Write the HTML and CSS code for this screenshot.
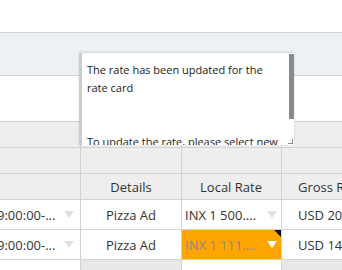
FILE: index.html
```html
<!DOCTYPE html>
<html lang="en">
<head>
    <meta charset="UTF-8">
    <title>Rate Card</title>
    <link rel="stylesheet" href="styles.css">
</head>
<body>
    <div class="page">
        <div class="top"></div>
        <div class="toolbar"></div>
        <div class="filter"></div>
        <div class="grid">
            <div class="row band"><div class="cell"></div><div class="cell"></div><div class="cell"></div><div class="cell"></div></div>
            <div class="row band"><div class="cell"></div><div class="cell"></div><div class="cell"></div><div class="cell"></div></div>
            <div class="row head">
                <div class="cell"></div>
                <div class="cell center">Details</div>
                <div class="cell center">Local Rate</div>
                <div class="cell">Gross Rate</div>
            </div>
            <div class="row data">
                <div class="cell clip"><span class="time">9:00:00-...</span><span class="arrow"></span></div>
                <div class="cell center">Pizza Ad</div>
                <div class="cell"><span>INX 1 500....</span><span class="arrow"></span></div>
                <div class="cell">USD 20,000.00</div>
            </div>
            <div class="row data">
                <div class="cell clip"><span class="time">9:00:00-...</span><span class="arrow"></span></div>
                <div class="cell center">Pizza Ad</div>
                <div class="cell changed"><span>INX 1 111....</span><span class="arrow white"></span></div>
                <div class="cell">USD 14,000.00</div>
            </div>
            <div class="row foot"><div class="cell"></div><div class="cell gray"></div><div class="cell"></div><div class="cell gray"></div></div>
        </div>

        <div class="tooltip">
            <div class="tip-text">
                The rate has been updated for the<br>
                rate card<br>
                <br>
                <br>
                To update the rate, please select new
            </div>
            <div class="scrollbar"></div>
            <div class="grip"></div>
        </div>
    </div>
</body>
</html>
```

FILE: styles.css
```css
body {
    margin: 0;
    background: #ffffff;
    font-family: 'Open Sans', 'Noto Sans', sans-serif;
    color: #333333;
    overflow: hidden;
}

.page {
    position: relative;
    width: 342px;
    height: 270px;
    overflow: hidden;
}

.top {
    height: 32px;
}

.toolbar {
    height: 42px;
    border-top: 1px solid #cfd2d6;
    background: #eef1f4;
}

.filter {
    height: 45px;
    border-top: 1px solid #cfd2d6;
}

.grid {
    border-top: 1px solid #cfd2d6;
}

.row {
    display: flex;
    border-bottom: 1px solid #d2d2d2;
}

.cell {
    box-sizing: border-box;
    border-right: 1px solid #d2d2d2;
    display: flex;
    align-items: center;
    font-size: 13px;
    white-space: nowrap;
    overflow: hidden;
}

.cell:nth-child(1) { width: 81px; }
.cell:nth-child(2) { width: 101px; }
.cell:nth-child(3) { width: 100px; padding: 0 4px 0 3px; justify-content: space-between; }
.cell:nth-child(4) { flex: 1; padding-left: 16px; border-right: none; }

.center {
    justify-content: center;
}

.band {
    height: 25px;
    background: #eeeeee;
}

.head {
    height: 25px;
    background: #eeeeee;
}

.head .cell:nth-child(3) {
    justify-content: center;
}

.data {
    height: 29px;
    background: #ffffff;
}

.clip {
    justify-content: space-between;
    padding-right: 6px;
}

.time {
    margin-left: -3px;
}

.arrow {
    width: 0;
    height: 0;
    border-left: 5px solid transparent;
    border-right: 5px solid transparent;
    border-top: 7px solid #e0e0e0;
}

.arrow.white {
    border-top-color: #ffffff;
}

.changed {
    position: relative;
    background: #ffa500;
    color: #8a8a8a;
}

.changed::after {
    content: "";
    position: absolute;
    top: 0;
    right: 0;
    border-top: 7px solid #111111;
    border-left: 7px solid transparent;
}

.foot {
    height: 12px;
    border-bottom: none;
}

.gray {
    background: #e8e8e8;
}

.tooltip {
    position: absolute;
    left: 79px;
    top: 53px;
    width: 215px;
    height: 92px;
    box-sizing: border-box;
    background: #ffffff;
    border-left: 3px solid #cccccc;
    box-shadow: 0 -1px 2px rgba(0, 0, 0, 0.12);
    overflow: hidden;
}

.tip-text {
    padding: 8px 0 0 5px;
    font-size: 11px;
    line-height: 18px;
    color: #1a1a1a;
    white-space: nowrap;
}

.scrollbar {
    position: absolute;
    top: 1px;
    right: 0;
    width: 5px;
    height: 65px;
    background: #8a8a8a;
}

.grip {
    position: absolute;
    right: 1px;
    bottom: 1px;
    width: 4px;
    height: 4px;
    border-right: 1px solid #888888;
    border-bottom: 1px solid #888888;
}
```
